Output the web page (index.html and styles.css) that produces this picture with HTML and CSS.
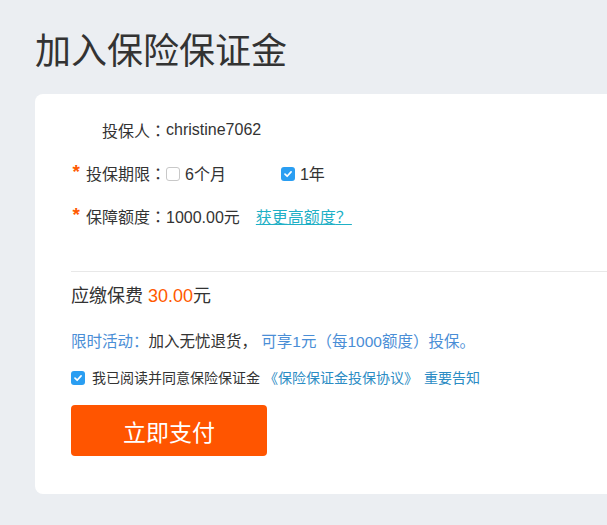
FILE: index.html
```html
<!DOCTYPE html>
<html lang="zh-CN">
<head>
<meta charset="UTF-8">
<meta name="viewport" content="width=device-width, initial-scale=1.0">
<title>加入保险保证金</title>
<link rel="stylesheet" href="styles.css">
</head>
<body>

<div class="page">
  <h1 class="page-title">加入保险保证金</h1>

  <div class="card">
    <!-- form rows -->
    <div class="form">
      <div class="form-row">
        <div class="form-label">投保人<span class="punc">：</span></div>
        <div class="form-value">christine7062</div>
      </div>
      <div class="form-row">
        <div class="form-label"><span class="star">*</span>投保期限<span class="punc">：</span></div>
        <div class="form-value">
          <label class="option">
            <span class="checkbox"></span>6个月
          </label>
          <label class="option">
            <span class="checkbox checked">
              <svg viewBox="0 0 14 14"><path d="M3.5 7.2 L6 9.6 L10.6 4.6" fill="none" stroke="#fff" stroke-width="2" stroke-linecap="round" stroke-linejoin="round"/></svg>
            </span>1年
          </label>
        </div>
      </div>
      <div class="form-row">
        <div class="form-label"><span class="star">*</span>保障额度<span class="punc">：</span></div>
        <div class="form-value">
          1000.00元
          <a class="more-link" href="#">获更高额度<span class="punc">？</span></a>
        </div>
      </div>
    </div>

    <div class="divider"></div>

    <div class="fee">应缴保费 <span class="fee-amount">30.00</span>元</div>

    <div class="promo">
      <span class="blue">限时活动<span class="punc">：</span></span>加入无忧退货， <span class="blue">可享1元（每1000额度）投保。</span>
    </div>

    <div class="agree">
      <span class="checkbox checked">
        <svg viewBox="0 0 14 14"><path d="M3.5 7.2 L6 9.6 L10.6 4.6" fill="none" stroke="#fff" stroke-width="2" stroke-linecap="round" stroke-linejoin="round"/></svg>
      </span>
      <span>我已阅读并同意保险保证金</span>
      <a class="agree-link" href="#">《保险保证金投保协议》</a>
      <a class="agree-link notice" href="#">重要告知</a>
    </div>

    <button class="pay-button">立即支付</button>
  </div>
</div>

</body>
</html>
```

FILE: styles.css
```css
body {
  margin: 0;
  background: #ebeef2;
  font-family: "Liberation Sans", "Noto Sans CJK SC", sans-serif;
  color: #333;
  overflow: hidden;
}

.page {
  padding: 24px 0 0 35px;
}

.page-title {
  margin: 0 0 22px;
  font-family: "Noto Sans CJK SC", sans-serif;
  font-size: 36px;
  font-weight: normal;
  line-height: 48px;
  color: #333;
}

/* centred full-width colon / question mark */
.punc {
  font-family: "Noto Sans CJK JP", sans-serif;
}

/* white panel, runs past the right edge */
.card {
  width: 640px;
  background: #fff;
  border-radius: 8px;
  padding: 14px 36px 38px;
}

.form-row {
  display: flex;
  align-items: center;
  height: 43px;
  font-size: 16px;
}

.form-label {
  width: 95px;
  display: flex;
  justify-content: flex-end;
  align-items: center;
  white-space: nowrap;
}

.star {
  color: #ff5a00;
  font-size: 19px;
  font-weight: bold;
  margin-right: 6px;
  position: relative;
  top: -1px;
}

.form-value {
  display: flex;
  align-items: center;
  white-space: nowrap;
}

.option {
  display: flex;
  align-items: center;
  margin-right: 55px;
}

.checkbox {
  display: inline-flex;
  align-items: center;
  justify-content: center;
  box-sizing: border-box;
  width: 14px;
  height: 14px;
  border: 1px solid #c8c8c8;
  border-radius: 3px;
  background: #fff;
  margin-right: 5px;
  position: relative;
  top: 1px;
}

.checkbox.checked {
  border: none;
  background: #2a9ef2;
}

.checkbox svg {
  width: 12px;
  height: 12px;
}

.more-link {
  margin-left: 16px;
  color: #1fb0c6;
  text-decoration: underline;
}

.divider {
  margin-top: 34px;
  border-top: 1px solid #e8e8e8;
}

.fee {
  margin-top: 12px;
  font-size: 18px;
  line-height: 24px;
}

.fee-amount {
  color: #ff5a00;
}

.promo {
  margin-top: 20px;
  font-size: 15.5px;
  line-height: 24px;
  white-space: nowrap;
}

.blue {
  color: #4a8ed6;
}

.agree {
  display: flex;
  align-items: center;
  margin-top: 14px;
  font-size: 14px;
  line-height: 20px;
  white-space: nowrap;
}

.agree .checkbox {
  margin-right: 7px;
  top: 0;
}

.agree-link {
  margin-left: 4px;
  color: #2b8cc4;
  text-decoration: none;
}

.agree-link.notice {
  margin-left: 6px;
}

.pay-button {
  display: block;
  margin-top: 17px;
  width: 196px;
  height: 51px;
  border: none;
  border-radius: 4px;
  background: #ff5500;
  color: #fff;
  font-family: "Noto Sans CJK SC", sans-serif;
  font-size: 23px;
  cursor: pointer;
}
```
